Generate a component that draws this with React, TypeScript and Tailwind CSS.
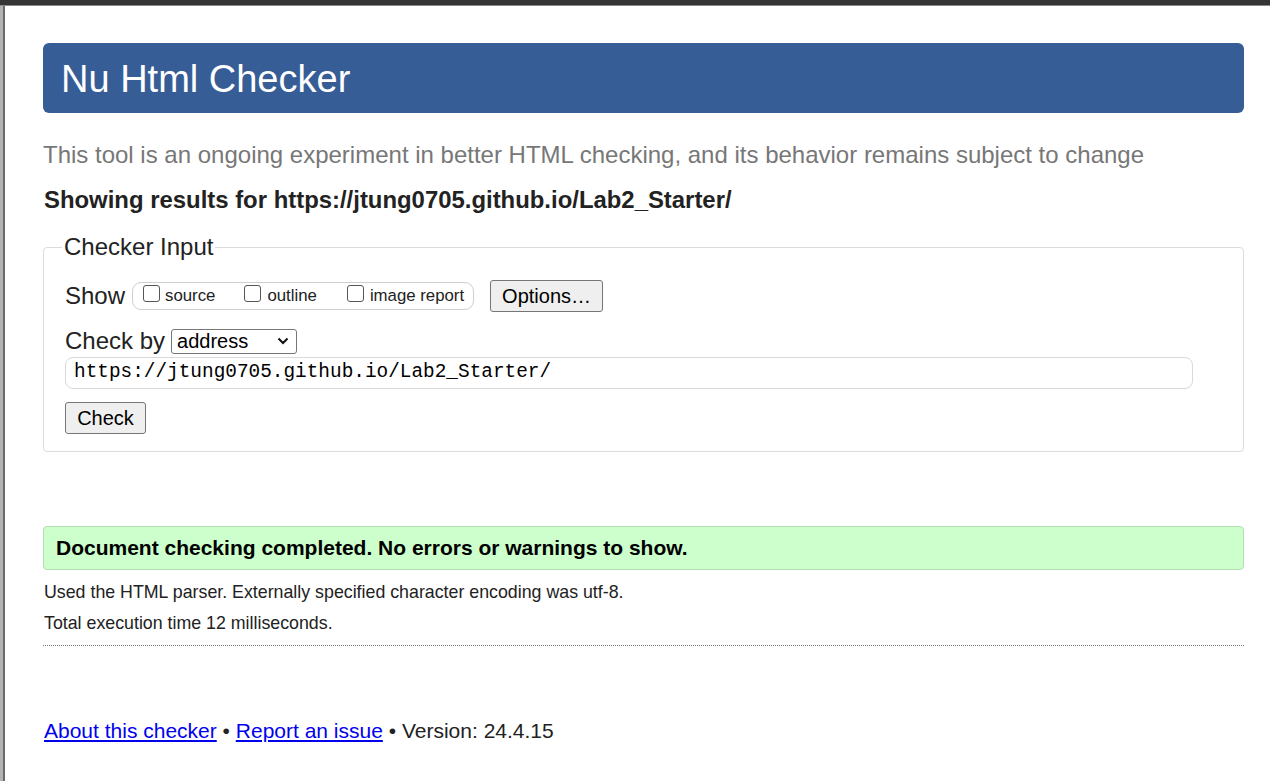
export default function App() {
  return (
    <div className="flex flex-col w-[1270px] h-[781px] overflow-hidden bg-white font-['Liberation_Sans',Arial,sans-serif] text-[#222]">
      <div className="h-[5px] bg-[#353535] shrink-0" />
      <div className="h-px bg-[#8a8a8a] shrink-0" />
      <div className="flex flex-1 min-h-0">
        <div className="flex shrink-0">
          <div className="w-[3px] bg-[#b3b3b3]" />
          <div className="w-[2px] bg-[#6b6b6b]" />
        </div>
        <main className="flex-1 pl-[38px] pr-[26px] pt-[37px]">
          <header className="h-[70px] rounded-[6px] bg-[#365d95] flex items-center pl-[18px]">
            <h1 className="text-white text-[38px] leading-none mt-[2px]">Nu Html Checker</h1>
          </header>

          <p className="mt-[27px] text-[24px] leading-[30px] text-[#777]">
            This tool is an ongoing experiment in better HTML checking, and its behavior remains subject to change
          </p>
          <p className="mt-[15px] text-[23.9px] leading-[30px] font-bold pl-px">
            Showing results for https://jtung0705.github.io/Lab2_Starter/
          </p>

          <fieldset className="mt-[19px] border border-[#dcdcdc] rounded-[4px] pl-[21px] pr-[50px] pb-[17px] pt-[20px]">
            <legend className="text-[24px] leading-[26px] ml-[-3px] px-[2px]">Checker Input</legend>

            <div className="flex items-center">
              <span className="text-[24px] leading-[28px] mr-[7px]">Show</span>
              <div className="flex items-center w-[342px] h-[28px] border border-[#cfcfcf] rounded-[9px] pl-[10px] text-[16.8px]">
                <label className="flex items-center">
                  <span className="w-[17px] h-[17px] border border-[#555] rounded-[3px] mr-[5px] mb-[5px]" />
                  <span>source</span>
                </label>
                <label className="flex items-center ml-[29px]">
                  <span className="w-[17px] h-[17px] border border-[#555] rounded-[3px] mr-[6px] mb-[5px]" />
                  <span>outline</span>
                </label>
                <label className="flex items-center ml-[30px]">
                  <span className="w-[17px] h-[17px] border border-[#555] rounded-[3px] mr-[6px] mb-[5px]" />
                  <span>image report</span>
                </label>
              </div>
              <button className="ml-[16px] h-[32px] w-[113px] bg-[#efefef] border border-[#767676] rounded-[3px] text-[20px] leading-none text-black">
                Options…
              </button>
            </div>

            <div className="flex items-center mt-[15px]">
              <span className="text-[24px] leading-[28px] mr-[6px]">Check by</span>
              <div className="flex items-center justify-between w-[126px] h-[25px] border border-[#767676] rounded-[3px] pl-[5px] pr-[7px] text-[20px] text-black">
                <span className="leading-none">address</span>
                <svg width="12" height="8" viewBox="0 0 12 8" fill="none">
                  <path d="M1.5 1.5 L6 6 L10.5 1.5" stroke="#111" strokeWidth="2" />
                </svg>
              </div>
            </div>

            <div className="mt-[2px] h-[32px] border border-[#d9d9d9] rounded-[8px] flex items-center pl-[8px] font-['Liberation_Mono',monospace] text-[19.4px] text-black">
              https://jtung0705.github.io/Lab2_Starter/
            </div>

            <button className="mt-[13px] h-[32px] w-[81px] bg-[#efefef] border border-[#767676] rounded-[3px] text-[20px] leading-none text-black">
              Check
            </button>
          </fieldset>

          <div className="mt-[74px] h-[44px] bg-[#ccffcc] border border-[#b5ddb5] rounded-[4px] flex items-center pl-[12px]">
            <span className="text-[21px] font-bold text-black">
              Document checking completed. No errors or warnings to show.
            </span>
          </div>

          <p className="mt-[11px] text-[17.8px] leading-[22px] pl-px">
            Used the HTML parser. Externally specified character encoding was utf-8.
          </p>
          <p className="mt-[9px] text-[17.8px] leading-[22px] pl-px">Total execution time 12 milliseconds.</p>
          <div className="mt-[11px] border-t border-dotted border-[#777]" />

          <p className="mt-[71px] text-[21px] leading-[28px] pl-px text-[#222]">
            <a href="#" className="text-[#0000ee] underline">About this checker</a>
            {' • '}
            <a href="#" className="text-[#0000ee] underline">Report an issue</a>
            {' • Version: 24.4.15'}
          </p>
        </main>
      </div>
    </div>
  );
}
